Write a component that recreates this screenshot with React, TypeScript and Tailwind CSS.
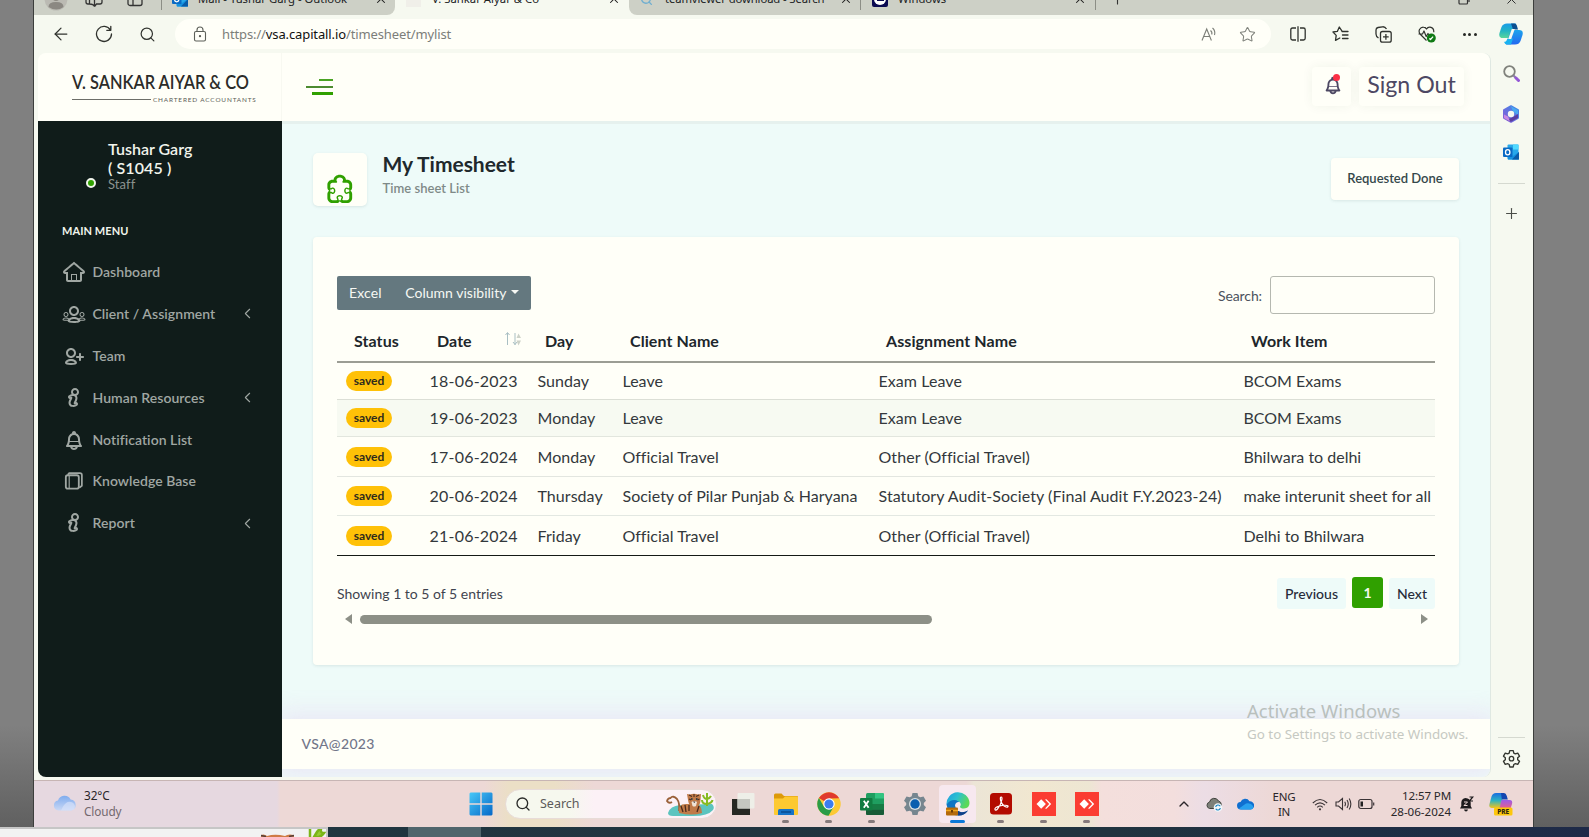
import React from "react";
import {
  TiHomeOutline,
  TiGroupOutline,
  TiUserAddOutline,
  TiInfoLargeOutline,
  TiBell,
  TiPuzzleOutline,
} from "react-icons/ti";
import {
  ArrowLeft,
  ChevronLeft,
  ChevronUp,
  Plus,
  Search,
  Star,
  X,
} from "lucide-react";

/* ---------- Small brand icons ---------- */

function OutlookIcon({ className }: { className?: string }) {
  return (
    <svg viewBox="0 0 16 16" className={className}>
      <rect x="4.5" y="0.5" width="11" height="15" rx="1" fill="#28a8ea" />
      <rect x="10" y="0.5" width="5.5" height="5" fill="#50d9ff" />
      <path d="M4 8l6 4 6-4v7.5H5z" fill="#1490df" />
      <path d="M16 8v7.5H9z" fill="#0a5ba8" />
      <rect x="0" y="3.5" width="9.5" height="9.5" rx="1" fill="#0a6ac4" />
      <ellipse cx="4.7" cy="8.2" rx="2.2" ry="2.6" fill="none" stroke="#fff" strokeWidth="1.3" />
    </svg>
  );
}

function CopilotIcon({ className }: { className?: string }) {
  return (
    <svg viewBox="0 0 24 22" className={className}>
      <defs>
        <linearGradient id="cpa" x1="0" y1="0" x2="0" y2="1">
          <stop offset="0" stopColor="#1a9be8" />
          <stop offset="0.5" stopColor="#22b4c4" />
          <stop offset="1" stopColor="#57d69a" />
        </linearGradient>
        <linearGradient id="cpb" x1="0" y1="0" x2="0" y2="1">
          <stop offset="0" stopColor="#1ca4ec" />
          <stop offset="1" stopColor="#2468f0" />
        </linearGradient>
      </defs>
      <path d="M8 .5h9L12 15H4Q-.8 15 .5 10L2.500 4Q4 .5 8 .5z" fill="url(#cpa)" />
      <path d="M12 .5h3.200q2.300 0 3 3.300l.8 2.700h-5z" fill="#0c4f90" />
      <path d="M16 21.500H7L12 7h8q4.800 0 3.500 5l-2 6q-1.500 3.500-5.500 3.500z" fill="url(#cpb)" />
      <path d="M8 21.500h4l2-6H8.500Q7 20 4.800 18.500q1 3 3.200 3z" fill="#19b2f0" />
      <path d="M12.800 6h3l-3.600 10H9.200z" fill="#f6f9f0" />
    </svg>
  );
}

function M365Icon({ className }: { className?: string }) {
  return (
    <svg viewBox="0 0 18 18" className={className}>
      <defs>
        <linearGradient id="mga" x1="0" y1="1" x2="1" y2="0">
          <stop offset="0" stopColor="#8a5bd8" />
          <stop offset="1" stopColor="#3b8ce8" />
        </linearGradient>
      </defs>
      <path d="M9 1.200l7 4v7.600l-7 4-7-4V5.200z" fill="url(#mga)" stroke="url(#mga)" strokeWidth="2" strokeLinejoin="round" />
      <path d="M9 1.200l7 4v4.500l-5-3z" fill="#4aa9f0" />
      <path d="M16 9v4l-7 3.800L5 15l6-3z" fill="#5a3fa0" />
      <path d="M2 13V9.500l4 2 2 5z" fill="#c98ae0" />
      <circle cx="9" cy="9" r="3.200" fill="#f6f9f0" />
    </svg>
  );
}

function WindowsIcon({ className }: { className?: string }) {
  return (
    <svg viewBox="0 0 24 24" className={className}>
      <defs>
        <linearGradient id="wing" x1="0" y1="0" x2="1" y2="1">
          <stop offset="0" stopColor="#48c8f8" />
          <stop offset="1" stopColor="#0568c8" />
        </linearGradient>
      </defs>
      <path d="M1.500.5H11.300V11.300H.5V1.500zM12.700.5H22.500l1 1v9.800H12.700zM.5 12.700H11.300V23.500H1.500l-1-1zM12.700 12.700H23.500v9.800l-1 1H12.700z" fill="url(#wing)" />
    </svg>
  );
}

function KnowledgeIcon({ className }: { className?: string }) {
  return (
    <svg viewBox="0 0 25 25" className={className} fill="none" stroke="currentColor" strokeLinejoin="round">
      <rect x="4" y="6.500" width="13.500" height="14" rx="2" strokeWidth="1.900" />
      <path d="M6 6l1.500-1.800h11.200q2 0 2 2V17.500L18 19.500" strokeWidth="1.800" />
      <path d="M7.500 7v13" strokeWidth="1.200" />
    </svg>
  );
}

function Tiger({ className }: { className?: string }) {
  return (
    <svg viewBox="0 0 50 26" className={className}>
      <path d="M3 22q2-7 12-8l32-1q3 3 1 6-5 6-20 6H8q-5 0-5-3z" fill="#5cc4bf" />
      <path d="M14 20Q15 12 12 8 8 4 5.500 7 3 7 2 10q2 3 5 1" fill="none" stroke="#9a6038" strokeWidth="1.800" />
      <path d="M14 22q-2-9 7-9h10q6 1 6 9-10 3-23 0z" fill="#c07a48" />
      <path d="M16 15l2 6M20 14l1 7M24 14v6M34 15l-2 6" stroke="#4a2a1c" strokeWidth="1.300" />
      <path d="M22 3l3 .5q4-1.500 8 0L36 3l-.5 6q0 6-6 8-6-2-6.500-8z" fill="#c07a48" />
      <path d="M24 4l3 1.500M34 4l-3 1.500M29 3v3M24 8l2 1M34.500 8l-2 1" stroke="#4a2a1c" strokeWidth="1.100" />
      <circle cx="26.800" cy="8" r=".9" fill="#2b3a44" />
      <circle cx="31.800" cy="8" r=".9" fill="#2b3a44" />
      <path d="M26.500 11q3-2 5.500 0l-1 4q-2 1-3.500 0z" fill="#efe3d6" />
      <path d="M28 10.500h2.500l-1.200 1.500z" fill="#3a2722" />
      <path d="M42 15V2M42 13q-5 0-5-4M42 13q5-1 5.500-4M42 8q-3 0-4-4M42 8q3-1 4-3" fill="none" stroke="#86bb22" strokeWidth="2" />
    </svg>
  );
}

/* ---------- Browser chrome ---------- */

function TabClose({ className = "" }: { className?: string }) {
  return <X className={`h-[14px] w-[14px] shrink-0 text-[#222] ${className}`} strokeWidth={1.8} />;
}

function TabBar() {
  return (
    <div className="h-[15px] shrink-0 overflow-hidden bg-[#f6f9f0] font-['Noto_Sans',sans-serif] text-[11.3px] text-[#20221f]">
      <div className="-mt-[17px] flex h-8 items-center whitespace-nowrap">
        <div className="flex h-full w-[361px] shrink-0 items-center rounded-br-lg bg-[#cdd0c6]">
          <svg viewBox="0 0 24 24" className="ml-[10px] h-6 w-6 shrink-0">
            <circle cx="12" cy="12" r="11.500" fill="#bbbab3" />
            <circle cx="12" cy="9.500" r="4.500" fill="#8b8882" />
            <path d="M4.500 20q0-5 7.500-5t7.500 5q-7 5-15 0z" fill="#8b8882" />
          </svg>
          <svg viewBox="0 0 18 18" className="ml-[17px] h-[18px] w-[18px] shrink-0" fill="none" stroke="#333" strokeWidth="1.300">
            <path d="M1 3v9q0 2 2 2h2M4.500 1v13q4 0 5 2.500V4Q8.500 1 4.500 1zM13 2h2q2 0 2 2v8q0 2-2 2h-3.500l-2 2.500" />
          </svg>
          <svg viewBox="0 0 16 16" className="ml-[24px] h-4 w-4 shrink-0" fill="none" stroke="#333" strokeWidth="1.300">
            <rect x="1" y="1" width="14" height="13.500" rx="2" />
            <path d="M6 1v13.500M1 5h14" />
          </svg>
          <span className="ml-[18px] h-[22px] w-px bg-[#8c8e86]" />
          <OutlookIcon className="ml-[10px] h-4 w-4 shrink-0" />
          <span className="ml-[10px] w-[176px]">Mail - Tushar Garg - Outlook</span>
          <TabClose />
        </div>
        <div className="flex h-full w-[234px] shrink-0 items-center">
          <span className="ml-[11px] h-[15px] w-[15px] bg-[#f0efe9]" />
          <span className="ml-[11px] w-[175px] tracking-[0.020px]">V. Sankar Aiyar &amp; Co</span>
          <TabClose />
        </div>
        <div className="flex h-full grow items-center rounded-bl-lg bg-[#cdd0c6]">
          <Search className="ml-[11px] h-[13px] w-[13px] text-[#6faed0]" strokeWidth={2.6} />
          <span className="ml-[12px] w-[174px] tracking-[-0.120px]">teamviewer download - Search</span>
          <TabClose />
          <span className="ml-[7px] h-[22px] w-px bg-[#8c8e86]" />
          <span className="ml-[11px] flex h-[16px] w-[16px] items-center justify-center rounded-[2px] bg-[#0b0a52]">
            <span className="flex h-[12px] w-[12px] items-center justify-center rounded-full bg-white">
              <span className="h-[3px] w-[7px] bg-[#0b0a52]" />
            </span>
          </span>
          <span className="ml-[10px] w-[175px]">Windows</span>
          <TabClose />
          <span className="ml-[8px] h-[22px] w-px bg-[#8c8e86]" />
          <Plus className="ml-[14px] h-[15px] w-[15px] text-[#333]" strokeWidth={1.8} />
          <svg viewBox="0 0 12 12" className="ml-[333px] h-3 w-3 shrink-0" fill="none" stroke="#333" strokeWidth="1.200">
            <rect x="1" y="3" width="8.500" height="8" rx="1" />
            <path d="M3 1h7q1 0 1 1v7" />
          </svg>
          <X className="ml-[34px] h-[15px] w-[15px] text-[#333]" strokeWidth={1.6} />
        </div>
      </div>
    </div>
  );
}

function Toolbar() {
  const cell = "flex w-[43px] shrink-0 items-center justify-center";
  return (
    <div className="flex h-[38px] shrink-0 items-center bg-[#f6f9f0] text-[#30332e]">
      <div className="flex w-[141px] shrink-0 items-center pl-[17px]">
        <ArrowLeft className="h-[20px] w-[20px]" strokeWidth={1.5} />
        <svg viewBox="0 0 18 18" className="ml-[24px] h-[18px] w-[18px]" fill="none" stroke="currentColor" strokeWidth="1.300" strokeLinecap="round" strokeLinejoin="round">
          <path d="M15.500 5.200A7.500 7.500 0 1 0 16.500 9M15.800 1.300v4h-4" />
        </svg>
        <Search className="ml-[26px] h-[17px] w-[17px]" strokeWidth={1.7} />
      </div>
      <div className="flex h-[30px] w-[1096px] shrink-0 items-center rounded-full bg-[#fffff8]">
        <svg viewBox="0 0 14 16" className="ml-[18px] h-4 w-[14px]" fill="none" stroke="#5c5f58" strokeWidth="1.100">
          <rect x="1.500" y="5.500" width="11" height="9.500" rx="1.500" />
          <path d="M4 5.500V4q0-3 3-3t3 3v1.500" />
          <circle cx="7" cy="10.200" r=".6" fill="#5c5f58" />
        </svg>
        <span className="ml-[15px] font-['Noto_Sans',sans-serif] text-[13px] leading-5 tracking-[-0.12px] text-[#7c7e7a]">
          https://<span className="text-[#111]">vsa.capitall.io</span>/timesheet/mylist
        </span>
        <svg viewBox="0 0 16 16" className="ml-auto h-4 w-4 text-[#7b7e77]" fill="none" stroke="currentColor" strokeWidth="1.100">
          <path d="M1 14.500L5.700 3l4.700 11.500M2.700 10.500h6M9.500 4.500q2 1.500 1.200 4M11.500 2q3.200 2.800 2 7" />
        </svg>
        <Star className="mr-[15px] ml-[22px] h-[17px] w-[17px] text-[#80837c]" strokeWidth={1.5} />
      </div>
      <div className="ml-[5px] flex">
        <span className={cell}>
          <svg viewBox="0 0 16 16" className="h-4 w-4" fill="none" stroke="currentColor" strokeWidth="1.300">
            <path d="M6 2H2.500Q.8 2 .8 3.700v8.600q0 1.700 1.700 1.700H6M10 2h3.500q1.700 0 1.700 1.700v8.600q0 1.700-1.700 1.700H10M8 .3v15.400" />
          </svg>
        </span>
        <span className={cell}>
          <svg viewBox="0 0 17 16" className="h-4 w-[17px]" fill="none" stroke="currentColor" strokeWidth="1.300" strokeLinejoin="round" strokeLinecap="round">
            <path d="M10 5.200L7.300 1 5.300 5.400 1 6l3.200 3.400-.7 5L7.800 12M10 5.500h6M10.500 9H16M10.500 12.500H16" />
          </svg>
        </span>
        <span className={cell}>
          <svg viewBox="0 0 17 17" className="h-[17px] w-[17px]" fill="none" stroke="currentColor" strokeWidth="1.300">
            <rect x="5.500" y="5.500" width="10.700" height="10.700" rx="2" />
            <path d="M10.900 8v5.700M8 10.900h5.700M3.500 12Q1 10.500 1 8V4q0-2 2-2.500l4.500-.7Q10 .500 11.500 3" />
          </svg>
        </span>
        <span className={cell}>
          <svg viewBox="0 0 18 17" className="h-[17px] w-[18px]" fill="none" stroke="currentColor" strokeWidth="1.200" strokeLinejoin="round">
            <path d="M8.500 14.500L2 8Q.5 5.500 1.500 3.500 3 1 5.500 1.200q2 .1 3 1.800Q9.700 1 12 1.200q4 .5 3.800 5M.5 8h4l1.500-3 2.200 5.500L10 7.500l1 1.500" />
            <circle cx="13.300" cy="12" r="4.500" fill="#0f7a14" stroke="none" />
            <path d="M11.300 12.500l1.200 1 2.600-2.800" stroke="#fff" />
          </svg>
        </span>
        <span className={cell}>
          <i className="mx-[1px] h-[3px] w-[3px] rounded-full bg-[#262824]" />
          <i className="mx-[1.500px] h-[3px] w-[3px] rounded-full bg-[#262824]" />
          <i className="mx-[1px] h-[3px] w-[3px] rounded-full bg-[#262824]" />
        </span>
      </div>
      <CopilotIcon className="ml-[8px] h-[22px] w-6" />
    </div>
  );
}

function EdgeRail() {
  return (
    <div className="flex w-[40px] shrink-0 flex-col items-center bg-[#f6f9f0]">
      <svg viewBox="0 0 17 17" className="mt-[12px] h-[17px] w-[17px]" fill="none" strokeLinecap="round">
        <circle cx="6.500" cy="6.500" r="5.300" stroke="#80827c" strokeWidth="1.800" />
        <path d="M11 11l1.500 1.500" stroke="#8b7aa5" strokeWidth="2.200" />
        <path d="M13 13l2.500 2.500" stroke="#9357d6" strokeWidth="3" />
      </svg>
      <M365Icon className="mt-[23px] h-[18px] w-[18px]" />
      <OutlookIcon className="mt-[21px] h-4 w-4" />
      <span className="mt-[23px] h-px w-[27px] bg-[#d5d9d0]" />
      <Plus className="mt-[21px] h-[17px] w-[17px] text-[#4a4d47]" strokeWidth={1.6} />
      <span className="mt-auto h-px w-[27px] bg-[#d5d9d0]" />
      <svg viewBox="0 0 24 24" className="mt-[11px] mb-[12px] h-[19px] w-[19px]" fill="none" stroke="#33362f" strokeWidth="1.700" strokeLinejoin="round">
        <path d="M9.800 2h4.400l.7 3.100 2 1.100 3-.9 2.200 3.800-2.300 2.100v2.300l2.300 2.100-2.200 3.800-3-.9-2 1.100-.7 3.100H9.800l-.7-3.100-2-1.100-3 .9-2.200-3.800 2.300-2.100v-2.300L1.900 9.100l2.200-3.800 3 .9 2-1.100z" />
        <circle cx="12" cy="12.200" r="2.800" />
      </svg>
    </div>
  );
}

/* ---------- Application ---------- */

const menu = [
  { label: "Dashboard", Icon: TiHomeOutline, more: false },
  { label: "Client / Assignment", Icon: TiGroupOutline, more: true },
  { label: "Team", Icon: TiUserAddOutline, more: false },
  { label: "Human Resources", Icon: TiInfoLargeOutline, more: true },
  { label: "Notification List", Icon: TiBell, more: false },
  { label: "Knowledge Base", Icon: KnowledgeIcon, more: false },
  { label: "Report", Icon: TiInfoLargeOutline, more: true },
];

function Sidebar() {
  return (
    <aside className="flex w-[244px] shrink-0 flex-col rounded-bl-lg bg-[#101c1a]">
      <div className="flex pt-[19px] pl-[48px] text-[#f1f4ec]">
        <span className="mt-[38px] h-[10px] w-[10px] rounded-full border-2 border-[#f1f4ec] bg-[#30a000]" />
        <div className="ml-[12px]">
          <div className="text-base leading-[18.500px] font-semibold">Tushar Garg</div>
          <div className="text-base leading-[18.500px] font-semibold tracking-[0.1px]">( S1045 )</div>
          <div className="text-[13px] leading-[15px] tracking-[0.100px] text-[#8b928f]">Staff</div>
        </div>
      </div>
      <div className="mt-[30px] pl-[24px] text-[11px] leading-[18px] font-bold tracking-[0.080px] text-[#f1f4ec]">MAIN MENU</div>
      <nav className="mt-[11px]">
        {menu.map(({ label, Icon, more }) => (
          <div key={label} className="flex h-[41.900px] items-center pr-[26px] pl-[24px] text-[#a0a7a3]">
            <Icon className="h-6 w-6 shrink-0" />
            <span className="ml-[6.500px] grow text-sm font-semibold tracking-[0.050px]">{label}</span>
            {more && <ChevronLeft className="h-[17px] w-[17px]" strokeWidth={1.5} />}
          </div>
        ))}
      </nav>
    </aside>
  );
}

function AppHeader() {
  return (
    <header className="flex h-[68px] shrink-0 rounded-tl-lg rounded-tr-lg bg-[#fffff8]">
      <div className="flex w-[244px] shrink-0 flex-col border-r border-[#f8f9f1] pt-[20px] pl-[34px]">
        <div className="origin-left scale-x-[0.838] text-[19.500px] leading-[18px] font-semibold whitespace-nowrap text-[#2c2c29]">
          V. SANKAR AIYAR &amp; CO
        </div>
        <div className="mt-[4px] flex items-center">
          <span className="h-px w-[79px] bg-[#6d6e68]" />
          <span className="ml-[2px] text-[6.400px] leading-[9px] tracking-[0.850px] whitespace-nowrap text-[#5b5c57]">CHARTERED ACCOUNTANTS</span>
        </div>
      </div>
      <div className="mt-[26px] ml-[24px] flex w-[27px] flex-col items-end">
        <span className="h-[2px] w-[14px] bg-[#4aa323]" />
        <span className="mt-[5px] h-[2px] w-[27px] bg-[#4c8b30]" />
        <span className="mt-[4px] h-[3px] w-[21px] bg-[#30a000]" />
      </div>
      <div className="mt-[14px] mr-[26px] ml-auto flex gap-[8px]">
        <div className="relative flex h-[39px] w-[39px] items-center justify-center rounded-sm bg-[#fffff8] shadow-[0_0_12px_rgba(40,60,30,0.06)]">
          <TiBell className="mt-[-3px] ml-[2px] h-[22px] w-[22px] text-[#4d4863]" />
          <span className="absolute top-[7px] left-[21px] h-[7px] w-[7px] rounded-full bg-[#fb2f45]" />
        </div>
        <div className="flex h-[39px] w-[105px] items-center justify-center rounded-sm bg-[#fffff8] text-[23.200px] leading-9 whitespace-nowrap text-[#4d4863] shadow-[0_0_12px_rgba(40,60,30,0.06)]">
          <span className="-mt-[5px]">Sign Out</span>
        </div>
      </div>
    </header>
  );
}

const rows = [
  ["18-06-2023", "Sunday", "Leave", "Exam Leave", "BCOM Exams"],
  ["19-06-2023", "Monday", "Leave", "Exam Leave", "BCOM Exams"],
  ["17-06-2024", "Monday", "Official Travel", "Other (Official Travel)", "Bhilwara to delhi"],
  ["20-06-2024", "Thursday", "Society of Pilar Punjab & Haryana", "Statutory Audit-Society (Final Audit F.Y.2023-24)", "make interunit sheet for all"],
  ["21-06-2024", "Friday", "Official Travel", "Other (Official Travel)", "Delhi to Bhilwara"],
];
const rowStyles = [
  "h-[37px] border-[#dcdfd6]",
  "h-[37px] border-[#e2e6de] bg-[#f7faf2]",
  "h-[40px] border-[#e3e6e0]",
  "h-[39px] border-[#e3e8e2]",
  "h-[40px] border-[#151a16]",
];
const columns = "grid grid-cols-[83px_108px_84px_256px_365px_203px] items-center whitespace-nowrap";

function TimesheetTable() {
  return (
    <div className="text-base tracking-[0.050px] text-[#33383c]">
      <div className={`${columns} h-[49px] border-b-2 border-[#9b9d94] pt-[6px] font-bold tracking-[0.080px] text-[#20262b]`}>
        <span className="pl-[17px]">Status</span>
        <span className="flex items-center pl-[17px]">
          Date
          <svg viewBox="0 0 20 18" className="-mt-[3px] ml-[31px] h-[18px] w-5" fill="none">
            <path d="M4.500 15V3M2.500 5l2-2.500 2 2.500M12 3v12M10 12l2 2.500 2-2.500" stroke="#a9bfc3" strokeWidth="1" />
            <path d="M13.500 8l2-4.500L18 8zM13.500 10.500l2 5L18 10.500z" fill="#cdd2c8" />
          </svg>
        </span>
        <span className="pl-[17px]">Day</span>
        <span className="pl-[18px]">Client Name</span>
        <span className="pl-[18px]">Assignment Name</span>
        <span className="pl-[18px]">Work Item</span>
      </div>
      {rows.map((r, i) => (
        <div key={r[0]} className={`${columns} border-b ${rowStyles[i]}`}>
          <span className="pl-[9px]">
            <span className="flex h-[20px] w-[46px] items-center justify-center rounded-full bg-[#ffc107] text-[12px] leading-4 font-bold tracking-normal text-[#2e2b1c]">
              saved
            </span>
          </span>
          <span className="pl-[9.500px] tracking-[0.220px]">{r[0]}</span>
          <span className="pl-[9.500px]">{r[1]}</span>
          <span className="pl-[10.500px] tracking-[0.010px]">{r[2]}</span>
          <span className="pl-[10.500px] tracking-[0.070px]">{r[3]}</span>
          <span className="pl-[10.500px] tracking-normal">{r[4]}</span>
        </div>
      ))}
    </div>
  );
}

function Content() {
  const page = "flex h-[31px] items-center justify-center rounded-[3px] bg-[#eefbf9] text-sm font-medium text-[#272b3a]";
  return (
    <main className="flex grow flex-col overflow-hidden rounded-br-lg bg-[#eefbf9] shadow-[inset_0_4px_0_-1px_#e6f1ee]">
      <div className="flex shrink-0 px-[31px] pt-[32px]">
        <div className="flex h-[53px] w-[54px] justify-center rounded-[5px] bg-[#fffff8] pt-[18px] shadow-[0_1px_3px_rgba(60,90,90,0.13)]">
          <TiPuzzleOutline className="h-[35px] w-[35px] text-[#30a000]" />
        </div>
        <div className="ml-[15.500px]">
          <h1 className="-mt-px text-[21px] leading-6 font-bold tracking-[-0.020px] text-[#20282c]">My Timesheet</h1>
          <p className="mt-[4px] text-[13px] leading-4 font-semibold tracking-[0.020px] text-[#7f8a88]">Time sheet List</p>
        </div>
        <div className="mt-[5px] ml-auto flex h-[42px] w-[128px] items-center justify-center rounded-[4px] bg-[#fffff8] text-[13px] font-semibold tracking-[-0.020px] text-[#35484b] shadow-[0_1px_3px_rgba(60,90,90,0.12)]">
          Requested Done
        </div>
      </div>
      <section className="mx-[31px] mt-[31px] h-[428px] shrink-0 rounded-[4px] bg-[#fffff8] px-[24px] pt-[39px] shadow-[0_1px_3px_rgba(60,90,90,0.12)]">
        <div className="flex items-start justify-between">
          <div className="flex h-[34px] w-[194px] items-center rounded-[2px] bg-[#64787f] text-sm text-[#f6f8f4]">
            <span className="ml-[12px] tracking-[0.150px]">Excel</span>
            <span className="ml-[23.500px] tracking-[0.020px]">Column visibility</span>
            <span className="mt-[-3px] ml-[4px] border-x-[4px] border-t-[4px] border-x-transparent border-t-[#f6f8f4]" />
          </div>
          <label className="flex items-center text-sm text-[#4c525d]">
            <span className="mt-[2px] mr-[8px] tracking-[-0.100px]">Search:</span>
            <input className="h-[38px] w-[165px] rounded-[3px] border border-[#b5b8b0] bg-transparent" />
          </label>
        </div>
        <TimesheetTable />
        <div className="mt-[21px] flex items-start justify-between">
          <span className="mt-[6px] text-sm leading-[22px] text-[#3f444f]">Showing 1 to 5 of 5 entries</span>
          <div className="flex">
            <span className={`${page} mt-px w-[69px]`}>Previous</span>
            <span className="mx-[6px] flex h-[31px] w-[31px] items-center justify-center rounded-[3px] bg-[#30a000] text-sm font-bold text-[#f6faee]">1</span>
            <span className={`${page} mt-px w-[46px]`}>Next</span>
          </div>
        </div>
        <div className="mt-[5px] flex h-[10px] items-center pr-[7px] pl-[8px]">
          <span className="border-y-[5px] border-r-[7px] border-y-transparent border-r-[#8d9087]" />
          <span className="ml-[8px] h-[9px] w-[572px] rounded-full bg-[#8d9087]" />
          <span className="ml-auto border-y-[5px] border-l-[7px] border-y-transparent border-l-[#8d9087]" />
        </div>
      </section>
      <footer className="relative mt-[54px] mb-[8px] flex grow items-center bg-[#fffff8] pl-[19.500px] text-sm font-medium tracking-[0.350px] text-[#72768a] shadow-[0_0_24px_6px_rgba(232,218,244,0.6)]">
        VSA@2023
        <div className="absolute -top-[21px] left-[965px] font-['Noto_Sans',sans-serif] font-normal whitespace-nowrap text-[#b9c0bd]">
          <div className="text-[18.500px] leading-[25px] tracking-[0.030px]">Activate Windows</div>
          <div className="text-[13.400px] leading-[22px] tracking-[-0.010px] text-[#c6c9c2]">Go to Settings to activate Windows.</div>
        </div>
      </footer>
    </main>
  );
}

/* ---------- Taskbar ---------- */

function TaskIcon({ children, active, running = true }: { children: React.ReactNode; active?: boolean; running?: boolean }) {
  return (
    <div className="flex h-full w-[43px] shrink-0 items-center justify-center">
      <div className={`relative flex h-[38px] w-[37px] items-center justify-center rounded-[4px] ${active ? "bg-[#f7e8ef]" : ""}`}>
        {children}
        {active && <span className="absolute bottom-0 left-[11px] h-[3px] w-[15px] rounded-full bg-[#0b78d8]" />}
        {!active && running && <span className="absolute bottom-0 left-[15px] h-[3px] w-[7px] rounded-full bg-[#857a7b]" />}
      </div>
    </div>
  );
}

function AnyDesk() {
  return (
    <svg viewBox="0 0 24 24" className="h-6 w-6">
      <rect width="24" height="24" fill="#fb3d32" />
      <path d="M4.500 12l4.700-4.700 4.700 4.700-4.700 4.700z" fill="#fff" />
      <path d="M13 7.500l1.500-.2 4.700 4.700-4.700 4.700-1.500-.2L17.200 12z" fill="#fff" />
    </svg>
  );
}

function Taskbar() {
  return (
    <div className="flex h-[47px] shrink-0 items-center border-t border-[#c7b5b4] bg-[linear-gradient(90deg,#e6d8e0_0px,#e6d8e0_243px,#edd8d6_246px,#edd8d6_450px,#ebdfc6_475px,#ebdfc6_520px,#edd8d6_560px,#edd8d6_932px,#ece5d6_940px,#f1e7d0_1000px,#ede6d3_1055px,#f4dfdc_1068px,#f3dedd_1140px,#ecdde5_1170px,#edd8d6_1240px)] font-['Noto_Sans',sans-serif] text-[#2a2629]">
      <div className="flex w-[426px] shrink-0 items-center pl-[19px]">
        <svg viewBox="0 0 24 17" className="-mt-[3px] h-[17px] w-6">
          <defs>
            <linearGradient id="cl" x1="0" y1="0" x2="0" y2="1">
              <stop offset="0" stopColor="#7facee" />
              <stop offset="1" stopColor="#c9d8f5" />
            </linearGradient>
          </defs>
          <path d="M5.500 16.500a5 5 0 0 1-.5-9.900A6.800 6.800 0 0 1 17.600 5.500a5.600 5.600 0 0 1 .9 11z" fill="url(#cl)" />
          <path d="M10 12.500Q14 6 19.500 8.500q3.500 2.500 2 6-1 2-3.500 2H8z" fill="#dce5fa" opacity=".6" />
        </svg>
        <div className="-mt-px ml-[7px] text-[11.800px] leading-[15.500px] tracking-[-0.120px]">
          <div>32°C</div>
          <div className="text-[#73686e]">Cloudy</div>
        </div>
      </div>
      <div className="flex w-[42px] shrink-0 justify-center">
        <WindowsIcon className="h-6 w-6" />
      </div>
      <div className="ml-[3px] flex h-[30px] w-[212px] shrink-0 items-center rounded-full border border-[#e8dcd8] bg-[linear-gradient(90deg,#f6f8ee_0%,#f6f8ee_30%,#fcf1f6_42%,#fcf1f6_100%)] pr-[1px] pl-[9px]">
        <Search className="h-4 w-4 text-[#2a2b29]" strokeWidth={2} />
        <span className="ml-[9px] text-[12.500px] text-[#5c5a59]">Search</span>
        <Tiger className="ml-auto h-[26px] w-[50px]" />
      </div>
      <div className="ml-[4px] flex h-full items-center">
        <TaskIcon running={false}>
          <svg viewBox="0 0 24 24" className="h-6 w-6">
            <rect x="1" y="7" width="18" height="16" fill="#262823" />
            <rect x="6.500" y="1" width="17" height="15.500" rx="1" fill="#eef0e9" opacity=".93" />
            <rect x="6.500" y="7" width="12.500" height="9.500" fill="#c5c7c0" />
          </svg>
        </TaskIcon>
        <TaskIcon>
          <svg viewBox="0 0 24 24" className="h-6 w-6">
            <path d="M0 3q0-1.500 1.500-1.500h6L10 4h13q1 0 1 1v3H0z" fill="#dd9a0a" />
            <path d="M0 6.500h9L11 4.500h12q1 0 1 1V22q0 1-1 1H1q-1 0-1-1z" fill="#fdc931" />
            <path d="M4 23v-4.500q0-1.500 1.500-1.500h13Q20 17 20 18.500V23z" fill="#1673c8" />
            <path d="M7 20h10" stroke="#0a4b90" strokeWidth="1.500" />
          </svg>
        </TaskIcon>
        <TaskIcon>
          <svg viewBox="0 0 24 24" className="h-6 w-6">
            <circle cx="12" cy="12" r="11.700" fill="#fcc934" />
            <path d="M12 12L1.900 6.100A11.700 11.700 0 0 1 22.100 6.200L12 6.500z" fill="#e0392e" />
            <path d="M1.900 6A11.700 11.700 0 0 0 11.500 23.700L16.700 14.800 7 14.700z" fill="#2a9c48" />
            <circle cx="12" cy="12" r="5.700" fill="#fff" />
            <circle cx="12" cy="12" r="4.600" fill="#3a7df0" />
          </svg>
        </TaskIcon>
        <TaskIcon>
          <svg viewBox="0 0 24 24" className="h-6 w-6">
            <rect x="6" y="1" width="18" height="22" rx="1.500" fill="#1f9e60" />
            <path d="M15 1h7.500Q24 1 24 2.500V6.500h-9z" fill="#33c481" />
            <path d="M6 12h18v5.500H6z" fill="#177c45" />
            <path d="M6 17.500h18V21.500q0 1.500-1.500 1.500h-15Q6 23 6 21.500z" fill="#185c37" />
            <rect x="0" y="6" width="12.500" height="12.500" rx="1" fill="#107c41" />
            <path d="M3.800 8.700l4.800 7M8.600 8.700l-4.800 7" stroke="#fff" strokeWidth="1.800" />
          </svg>
        </TaskIcon>
        <TaskIcon running={false}>
          <svg viewBox="0 0 24 24" className="h-6 w-6">
            <path d="M9.500 1h5l.8 3.200 2 1.100 3.200-.9L23 8.700 20.800 11v2l2.200 2.300-2.500 4.300-3.200-.9-2 1.100-.8 3.200h-5l-.8-3.200-2-1.100-3.200.9L1 15.300 3.200 13v-2L1 8.700l2.500-4.300 3.200.9 2-1.100z" fill="#76868f" />
            <circle cx="12" cy="12" r="6" fill="#d8dfe2" />
            <circle cx="12" cy="12" r="4.700" fill="#0a5faf" />
          </svg>
        </TaskIcon>
        <TaskIcon active>
          <svg viewBox="0 0 24 24" className="h-6 w-6">
            <defs>
              <linearGradient id="edg" x1="0" y1="0" x2="1" y2="0.400">
                <stop offset="0" stopColor="#1e9de0" />
                <stop offset="0.500" stopColor="#2dc0d0" />
                <stop offset="1" stopColor="#5bd957" />
              </linearGradient>
            </defs>
            <path d="M.5 12.500q2-5.500 8-5 3.500.3 5 2.500-4-.5-4.500 3.500 0 5 5.500 6.500 4 .8 7.500-1.500-4 5.500-10 5-10-.5-11.500-11z" fill="#0f74c5" />
            <path d="M9 13.500q0 5 5.500 6.500 4 .8 7.500-1.500-4 5.500-10 5Z" fill="#123f87" />
            <path d="M.5 12.500A11.500 11.500 0 0 1 23.500 11q0 5-5.500 5.500-4 0-4-2 2-2.500-1-5Q6 5.500.5 12.500z" fill="url(#edg)" />
            <rect x="0" y="15.500" width="12" height="8" rx="1" fill="#b46a0c" />
            <path d="M0 18.500h12" stroke="#f0a81f" strokeWidth="1.500" />
            <rect x="5" y="18" width="2" height="2.500" fill="#6d3c04" />
          </svg>
        </TaskIcon>
        <TaskIcon>
          <svg viewBox="0 0 24 24" className="h-6 w-6">
            <rect x="1" y="1" width="22" height="21.500" rx="3.500" fill="#b30b00" />
            <path d="M6 17.500q-1-2.500 7-4 5-.7 6 .5.5 1.500-2 1-4-1.500-5.500-7-.5-3 .7-3 1.200 0 .6 3-1 5-4.300 9-2 2-2.500.5z" fill="none" stroke="#fff" strokeWidth="1.200" />
          </svg>
        </TaskIcon>
        <TaskIcon>
          <AnyDesk />
        </TaskIcon>
        <TaskIcon>
          <AnyDesk />
        </TaskIcon>
      </div>
      <ChevronUp className="ml-[68px] h-4 w-4 shrink-0" strokeWidth={2} />
      <svg viewBox="0 0 17 15" className="ml-[14px] h-[15px] w-[17px] shrink-0">
        <path d="M3.500 11.500a3.300 3.300 0 0 1 0-6.400A4.800 4.800 0 0 1 12.500 4a4 4 0 0 1 .5 7.500z" fill="#7d8079" stroke="#3f423d" />
        <circle cx="12" cy="10.500" r="4.300" fill="#f2f7fa" />
        <path d="M9.700 10a2.400 2.400 0 0 1 4.500-.7M14.300 11a2.400 2.400 0 0 1-4.500.7" fill="none" stroke="#1583c4" strokeWidth="1.200" />
      </svg>
      <svg viewBox="0 0 17 12" className="ml-[14px] h-3 w-[17px] shrink-0">
        <path d="M4 11.500A3.700 3.700 0 0 1 3.500 4.100 5 5 0 0 1 12.500 3.300a4 4 0 0 1 1 8.200z" fill="#0f6fd0" />
        <path d="M2 10.500L9 5.500q5-1 7 2.500 1 3.500-2.500 3.500H4z" fill="#28a0ee" />
      </svg>
      <div className="ml-[17px] w-[26px] shrink-0 text-center text-[11.500px] leading-[15.500px] tracking-[-0.200px]">
        <div>ENG</div>
        <div>IN</div>
      </div>
      <svg viewBox="0 0 16 13" className="ml-[15px] h-[13px] w-4 shrink-0" fill="none" stroke="#3a3336" strokeWidth="1.100">
        <path d="M.8 5Q8-2 15.200 5M3 7.200q5-4.700 10 0M5.200 9.300q2.800-2.500 5.600 0" />
        <circle cx="8" cy="11.300" r="1.100" fill="#3a3336" stroke="none" />
      </svg>
      <svg viewBox="0 0 17 14" className="ml-[7px] h-[14px] w-[17px] shrink-0" fill="none" stroke="#3a3336" strokeWidth="1.100">
        <path d="M1 5h2.500L7.500 1.500v11L3.500 9H1zM9.700 4.700q1.500 2.300 0 4.600M12 3q2.500 4 0 8M14.200 1.500q3.300 5.500 0 11" />
      </svg>
      <svg viewBox="0 0 17 12" className="ml-[6px] h-3 w-[17px] shrink-0" fill="none" stroke="#3a3336" strokeWidth="1.200">
        <rect x=".8" y="1.500" width="13.200" height="9" rx="2" />
        <rect x="2.500" y="3.500" width="2.500" height="5" fill="#222" stroke="none" />
        <path d="M15.700 4.500v3" />
      </svg>
      <div className="-mt-px ml-[12px] w-[64px] shrink-0 text-right text-[11.600px] leading-[15.500px] tracking-[-0.020px] whitespace-nowrap">
        <div className="tracking-[-0.150px]">12:57 PM</div>
        <div>28-06-2024</div>
      </div>
      <svg viewBox="0 0 15 16" className="ml-[8px] h-4 w-[15px] shrink-0">
        <path d="M1 12.500l1.300-2.500V6.500Q2.500 2.500 6.500 2q4.700.3 5.200 4.500V10l1.300 2.500zM5 13.500h4q-.5 2-2 2t-2-2z" fill="#1d1b1d" />
        <path d="M5 6h3.500L5 9.500h3.500" fill="none" stroke="#edd8d6" />
        <path d="M10.500 1h3.300l-3.300 4H14" fill="none" stroke="#1d1b1d" strokeWidth="1.200" />
      </svg>
      <svg viewBox="0 0 24 24" className="ml-[15px] h-6 w-6 shrink-0">
        <defs>
          <linearGradient id="pra" x1="0" y1="0" x2="0" y2="1">
            <stop offset="0" stopColor="#1b6de0" />
            <stop offset="0.500" stopColor="#2db3c2" />
            <stop offset="1" stopColor="#f2c31d" />
          </linearGradient>
          <linearGradient id="prb" x1="0" y1="0" x2="0" y2="1">
            <stop offset="0" stopColor="#9a5bea" />
            <stop offset="1" stopColor="#f5607a" />
          </linearGradient>
        </defs>
        <path d="M7 1h8l-4 15H3q-3.500 0-2.500-4l2-7.500Q3.500 1 7 1z" fill="url(#pra)" />
        <path d="M12 1h3q2 0 2.800 3l1 3.500h-6z" fill="#1447b0" />
        <path d="M12.500 8h8q3.500 0 2.500 4l-2 6h-11z" fill="url(#prb)" />
        <rect x="5" y="15.500" width="18.500" height="8" rx="1.500" fill="#fdc70b" />
        <text x="14.200" y="22" textAnchor="middle" fontSize="6.500" fontWeight="800" fontFamily="Noto Sans, sans-serif" fill="#2a2410">PRE</text>
      </svg>
    </div>
  );
}

function OuterDesktopStrip() {
  return (
    <div className="flex h-[10px] shrink-0 overflow-hidden bg-[linear-gradient(90deg,#203640_0%,#20333f_70%,#1e2a48_100%)]">
      <div className="flex w-[328px] shrink-0 border-t-2 border-r-2 border-[#c6c6c6] bg-[#f2f2f2]">
        <svg viewBox="0 0 70 8" className="ml-[258px] h-2 w-[70px] shrink-0">
          <path d="M3 8V6Q6 4.500 9 7q8-2.500 18 0 3-2.500 9-1V8z" fill="#cf7a45" />
          <path d="M3 6.500l5 1M36 6.500l-5 1" stroke="#574038" strokeWidth="1.500" />
          <path d="M52 0v8M56 8l3-5q2-3 4-3-1 4 3 4-2 3-5 4z" stroke="#7cb518" strokeWidth="2.500" fill="#9acb35" />
        </svg>
      </div>
      <div className="ml-[80px] w-[73px] bg-[#50656c]" />
    </div>
  );
}

export default function App() {
  return (
    <div className="flex h-[837px] w-[1589px] flex-col overflow-hidden bg-[#808080] font-['Lato',sans-serif]">
      <div className="flex h-[827px] shrink-0 bg-[linear-gradient(180deg,#808080_0px,#808080_725px,#606060_827px)] px-[33px] pr-[55px]">
        <div className="flex w-[1501px] shrink-0 flex-col border-x border-[#3c3e3c] bg-[#f6f9f0]">
          <TabBar />
          <Toolbar />
          <div className="flex h-[727px] shrink-0">
            <div className="mb-[3px] ml-[4px] flex w-[1453px] shrink-0 flex-col rounded-lg border-r border-[#dfe8e2]">
              <AppHeader />
              <div className="flex min-h-0 grow">
                <Sidebar />
                <Content />
              </div>
            </div>
            <EdgeRail />
          </div>
          <Taskbar />
        </div>
      </div>
      <OuterDesktopStrip />
    </div>
  );
}
